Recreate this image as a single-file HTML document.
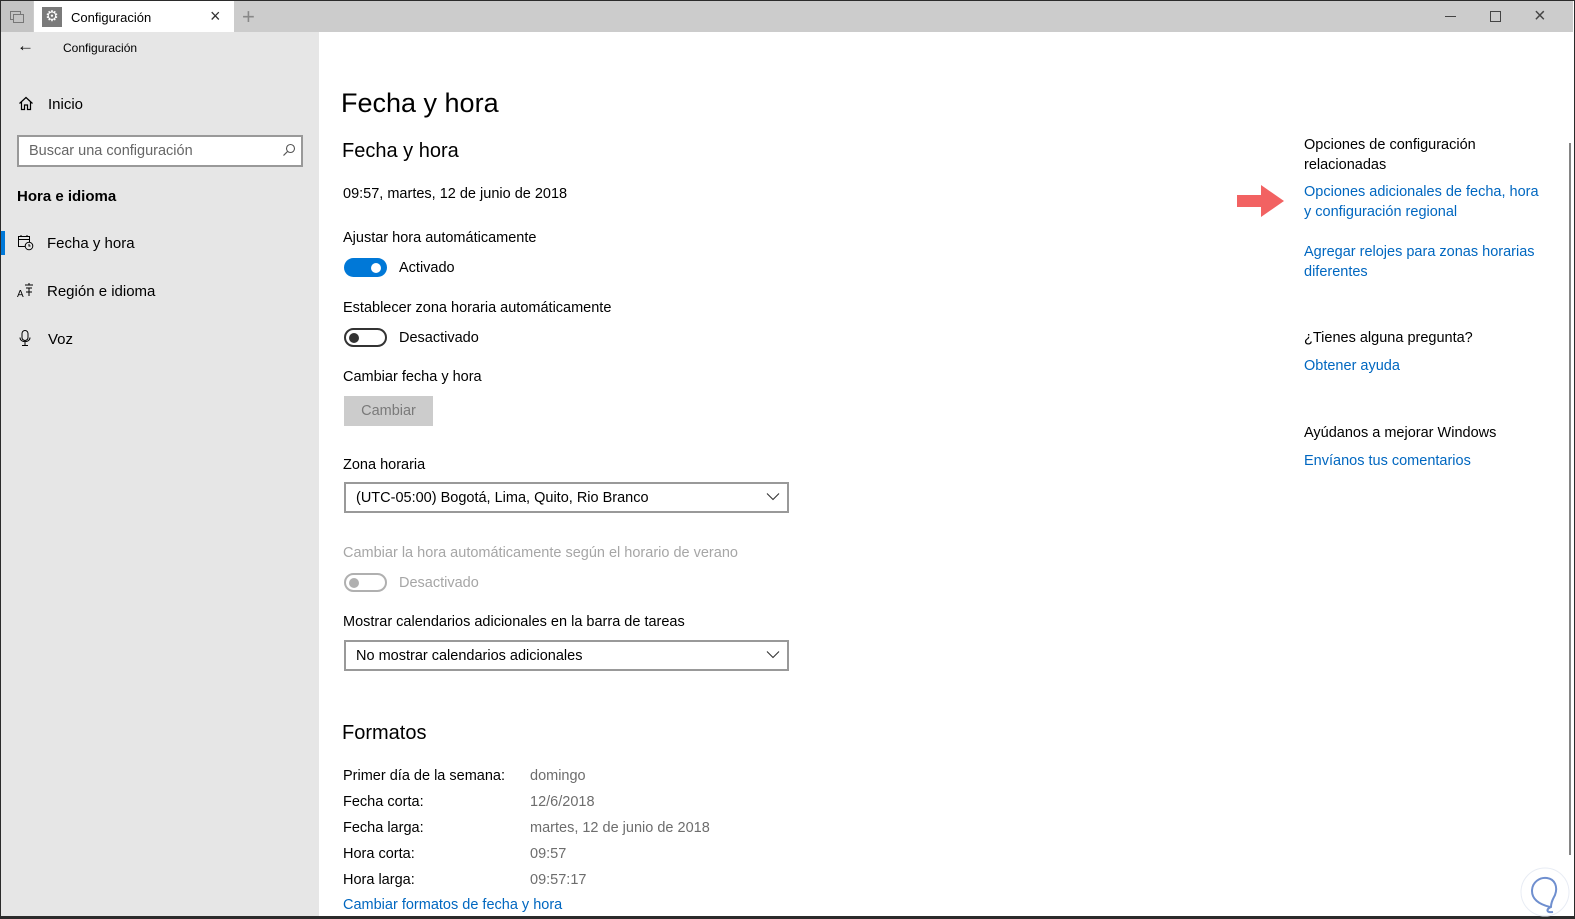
<!DOCTYPE html>
<html><head><meta charset="utf-8"><style>
*{margin:0;padding:0;box-sizing:border-box}
body{width:1575px;height:919px;overflow:hidden;background:#fff;font-family:"Liberation Sans",sans-serif;font-size:14px;color:#000;position:relative}
.a{position:absolute;white-space:nowrap}
div.a:not(:empty){margin-top:2px}
.l{color:#0067c0}
.g{color:#6d6d6d}
.d{color:#a6a6a6}
</style></head><body>
<div class="a" style="left:0;top:0;width:1575px;height:919px;border:1px solid #2b2b2b;border-bottom-width:3px"></div>
<div class="a" style="left:1px;top:1px;width:1572px;height:31px;background:#cccccc"></div>
<div class="a" style="left:1px;top:1px;width:32px;height:31px;background:#c4c4c4"></div>
<svg class="a" style="left:9px;top:10px" width="16" height="14"><rect x="1.5" y="1.5" width="10" height="8" fill="none" stroke="#777"/><rect x="4.5" y="4.5" width="10" height="8" fill="#c4c4c4" stroke="#777"/></svg>
<div class="a" style="left:34px;top:1px;width:200px;height:31px;background:#fff"></div>
<div class="a" style="left:42px;top:5px;width:20px;height:20px;background:#7a7a7a;color:#fff;font-size:15px;text-align:center;line-height:20px">⚙</div>
<div class="a" style="left:71px;top:8px;font-size:13px">Configuración</div>
<div class="a" style="left:210px;top:4px;font-size:18px;color:#333">×</div>
<div class="a" style="left:242px;top:2px;font-size:22px;color:#888;font-weight:300">+</div>
<div class="a" style="left:1445px;top:16px;width:11px;height:1px;background:#444"></div>
<div class="a" style="left:1490px;top:11px;width:11px;height:11px;border:1px solid #444"></div>
<div class="a" style="left:1534px;top:3px;font-size:20px;color:#444">×</div>

<div class="a" style="left:1px;top:32px;width:318px;height:884px;background:#e6e6e6"></div>
<div class="a" style="left:17px;top:34px;font-size:17px">←</div>
<div class="a" style="left:63px;top:39px;font-size:12px">Configuración</div>
<svg class="a" style="left:18px;top:96px" width="16" height="15"><path d="M1.5 7.5 L8 1.5 L14.5 7.5 M3.5 6 V13.5 H6.5 V9 H9.5 V13.5 H12.5 V6" fill="none" stroke="#000" stroke-width="1.2"/></svg>
<div class="a" style="left:48px;top:94px;font-size:15px">Inicio</div>
<div class="a" style="left:17px;top:135px;width:286px;height:32px;border:2px solid #999;background:#fff"></div>
<div class="a" style="left:29px;top:141px;font-size:14.5px;color:#666">Buscar una configuración</div>
<svg class="a" style="left:282px;top:143px" width="14" height="14"><circle cx="8.5" cy="5.5" r="4" fill="none" stroke="#555" stroke-width="1.1"/><path d="M5.5 8.5 L1.5 12.5" stroke="#555" stroke-width="1.2"/></svg>
<div class="a" style="left:17px;top:186px;font-size:15px;font-weight:bold">Hora e idioma</div>
<div class="a" style="left:1px;top:231px;width:4px;height:24px;background:#0078d7"></div>
<svg class="a" style="left:17px;top:234px" width="17" height="17"><rect x="1.5" y="2.5" width="11" height="10" fill="none" stroke="#000"/><path d="M1.5 5.5H12.5M4 1V3M10 1V3" stroke="#000"/><circle cx="12" cy="12" r="3.8" fill="#e6e6e6" stroke="#000"/><path d="M12 10V12H13.5" stroke="#000" fill="none"/></svg>
<div class="a" style="left:47px;top:233px;font-size:15px">Fecha y hora</div>
<svg class="a" style="left:17px;top:282px" width="18" height="16"><text x="0" y="15" font-size="10" font-family="Liberation Sans">A</text><path d="M8 3H16M12 1V3M9 6H15M12 6V14M9 10H15" stroke="#000" fill="none"/></svg>
<div class="a" style="left:47px;top:281px;font-size:15px">Región e idioma</div>
<svg class="a" style="left:18px;top:329px" width="14" height="18"><rect x="4" y="1.5" width="6" height="10" rx="3" fill="none" stroke="#000"/><path d="M2 8.5C2 14 12 14 12 8.5M7 13V16.5M4 16.5H10" fill="none" stroke="#000"/></svg>
<div class="a" style="left:48px;top:329px;font-size:15px">Voz</div>

<div class="a" style="left:341px;top:86px;font-size:27px">Fecha y hora</div>
<div class="a" style="left:342px;top:138px;font-size:20px">Fecha y hora</div>
<div class="a" style="left:343px;top:184px;font-size:14.5px">09:57, martes, 12 de junio de 2018</div>
<div class="a" style="left:343px;top:228px;font-size:14.5px">Ajustar hora automáticamente</div>
<div class="a" style="left:344px;top:258px;width:43px;height:19px;border-radius:10px;background:#0078d7"></div>
<div class="a" style="left:371px;top:263px;width:10px;height:10px;border-radius:5px;background:#fff"></div>
<div class="a" style="left:399px;top:258px;font-size:14.5px">Activado</div>
<div class="a" style="left:343px;top:298px;font-size:14.5px">Establecer zona horaria automáticamente</div>
<div class="a" style="left:344px;top:328px;width:43px;height:19px;border-radius:10px;border:2px solid #333"></div>
<div class="a" style="left:349px;top:333px;width:10px;height:10px;border-radius:5px;background:#333"></div>
<div class="a" style="left:399px;top:328px;font-size:14.5px">Desactivado</div>
<div class="a" style="left:343px;top:367px;font-size:14.5px">Cambiar fecha y hora</div>
<div class="a" style="left:344px;top:394px;width:89px;height:30px;background:#cccccc;color:#7a7a7a;font-size:14.5px;text-align:center;line-height:30px">Cambiar</div>
<div class="a" style="left:343px;top:455px;font-size:14.5px">Zona horaria</div>
<div class="a" style="left:344px;top:482px;width:445px;height:31px;border:2px solid #999"></div>
<div class="a" style="left:356px;top:488px;font-size:14.5px">(UTC-05:00) Bogotá, Lima, Quito, Rio Branco</div>
<svg class="a" style="left:766px;top:492px" width="14" height="9"><path d="M1 1.5L7 7.5L13 1.5" fill="none" stroke="#333" stroke-width="1.1"/></svg>
<div class="a d" style="left:343px;top:543px;font-size:14.5px">Cambiar la hora automáticamente según el horario de verano</div>
<div class="a" style="left:344px;top:573px;width:43px;height:19px;border-radius:10px;border:2px solid #b0b0b0"></div>
<div class="a" style="left:349px;top:578px;width:10px;height:10px;border-radius:5px;background:#b0b0b0"></div>
<div class="a d" style="left:399px;top:573px;font-size:14.5px">Desactivado</div>
<div class="a" style="left:343px;top:612px;font-size:14.5px">Mostrar calendarios adicionales en la barra de tareas</div>
<div class="a" style="left:344px;top:640px;width:445px;height:31px;border:2px solid #999"></div>
<div class="a" style="left:356px;top:646px;font-size:14.5px">No mostrar calendarios adicionales</div>
<svg class="a" style="left:766px;top:650px" width="14" height="9"><path d="M1 1.5L7 7.5L13 1.5" fill="none" stroke="#333" stroke-width="1.1"/></svg>
<div class="a" style="left:342px;top:720px;font-size:20px">Formatos</div>
<div class="a" style="left:343px;top:766px;font-size:14.5px">Primer día de la semana:</div>
<div class="a g" style="left:530px;top:766px;font-size:14.5px">domingo</div>
<div class="a" style="left:343px;top:792px;font-size:14.5px">Fecha corta:</div>
<div class="a g" style="left:530px;top:792px;font-size:14.5px">12/6/2018</div>
<div class="a" style="left:343px;top:818px;font-size:14.5px">Fecha larga:</div>
<div class="a g" style="left:530px;top:818px;font-size:14.5px">martes, 12 de junio de 2018</div>
<div class="a" style="left:343px;top:844px;font-size:14.5px">Hora corta:</div>
<div class="a g" style="left:530px;top:844px;font-size:14.5px">09:57</div>
<div class="a" style="left:343px;top:870px;font-size:14.5px">Hora larga:</div>
<div class="a g" style="left:530px;top:870px;font-size:14.5px">09:57:17</div>
<div class="a l" style="left:343px;top:895px;font-size:14.5px">Cambiar formatos de fecha y hora</div>

<div class="a" style="left:1304px;top:133px;font-size:14.5px;line-height:20px">Opciones de configuración<br>relacionadas</div>
<div class="a l" style="left:1304px;top:180px;font-size:14.5px;line-height:20px">Opciones adicionales de fecha, hora<br>y configuración regional</div>
<svg class="a" style="left:1236px;top:184px" width="50" height="35"><path d="M1 11H25V1L48 17L25 33V23H1Z" fill="#f26262"/></svg>
<div class="a l" style="left:1304px;top:240px;font-size:14.5px;line-height:20px">Agregar relojes para zonas horarias<br>diferentes</div>
<div class="a" style="left:1304px;top:328px;font-size:14.5px">¿Tienes alguna pregunta?</div>
<div class="a l" style="left:1304px;top:356px;font-size:14.5px">Obtener ayuda</div>
<div class="a" style="left:1304px;top:423px;font-size:14.5px">Ayúdanos a mejorar Windows</div>
<div class="a l" style="left:1304px;top:451px;font-size:14.5px">Envíanos tus comentarios</div>
<div class="a" style="left:1569px;top:143px;width:2px;height:712px;background:#858585"></div>
<svg class="a" style="left:1520px;top:865px" width="50" height="52"><circle cx="25" cy="27" r="24" fill="#fff" stroke="#e8ecf4"/><path d="M30 42C22 40 12 36 12 26C12 17 20 12 27 13C35 14 38 22 35 30C33 34 31 37 31 42C26 44 26 48 33 47" fill="none" stroke="#6f8fcf" stroke-width="2"/></svg>
</body></html>
